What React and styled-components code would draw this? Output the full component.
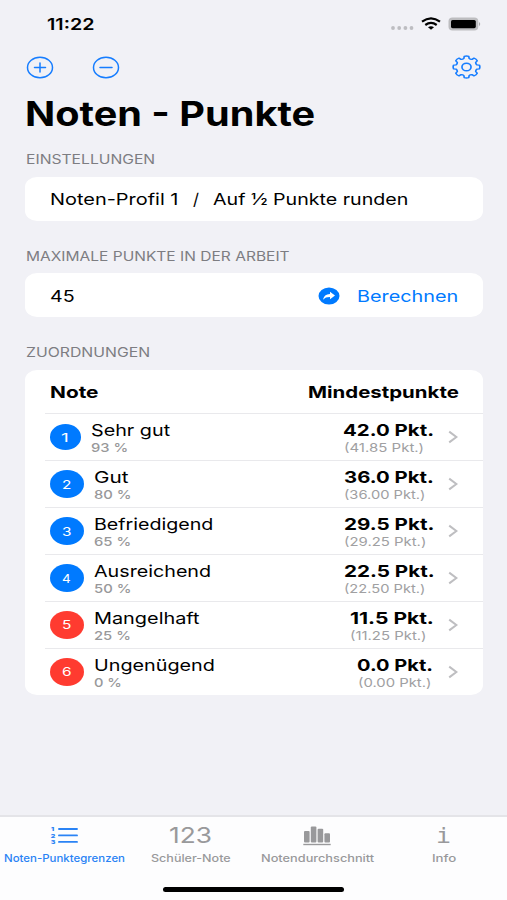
import { useLayoutEffect, useRef, useState } from 'react'
import styled, { createGlobalStyle } from 'styled-components'

const grades = [
	{ id: 1, name: 'Sehr gut', nameWidth: 79, percent: '93 %', percentWidth: 37, points: '42.0 Pkt.', pointsWidth: 90.5, exact: '(41.85 Pkt.)', exactWidth: 80 },
	{ id: 2, name: 'Gut', nameWidth: 34, percent: '80 %', percentWidth: 37, points: '36.0 Pkt.', pointsWidth: 90, exact: '(36.00 Pkt.)', exactWidth: 82 },
	{ id: 3, name: 'Befriedigend', nameWidth: 119, percent: '65 %', percentWidth: 37, points: '29.5 Pkt.', pointsWidth: 90, exact: '(29.25 Pkt.)', exactWidth: 82 },
	{ id: 4, name: 'Ausreichend', nameWidth: 117, percent: '50 %', percentWidth: 37, points: '22.5 Pkt.', pointsWidth: 90, exact: '(22.50 Pkt.)', exactWidth: 82 },
	{ id: 5, name: 'Mangelhaft', nameWidth: 106, percent: '25 %', percentWidth: 37, points: '11.5 Pkt.', pointsWidth: 84, exact: '(11.25 Pkt.)', exactWidth: 77 },
	{ id: 6, name: 'Ungenügend', nameWidth: 121, percent: '0 %', percentWidth: 28, points: '0.0 Pkt.', pointsWidth: 76.5, exact: '(0.00 Pkt.)', exactWidth: 73 },
]

// stretches its text horizontally to the given width
function Fit({ width, children }) {
	const ref = useRef(null)
	const [scale, setScale] = useState(1)
	useLayoutEffect(() => {
		setScale(width / ref.current.offsetWidth)
	}, [width])
	return (
		<FitBox $width={width}>
			<FitText ref={ref} style={{ transform: `scaleX(${scale})` }}>
				{children}
			</FitText>
		</FitBox>
	)
}

function gearPath() {
	const point = (r, deg) => {
		const a = (deg * Math.PI) / 180
		return `${(r * Math.cos(a)).toFixed(2)} ${(r * Math.sin(a)).toFixed(2)}`
	}
	let d = ''
	for (let i = 0; i < 8; i++) {
		const c = i * 45
		d += `${i ? 'L' : 'M'}${point(10.4, c - 14)} L${point(12.6, c - 10)} Q${point(13.4, c)} ${point(12.6, c + 10)} L${point(10.4, c + 14)} Q${point(9.4, c + 22.5)} ${point(10.4, c + 31)} `
	}
	return d + 'Z'
}

function GearIcon() {
	return (
		<Icon width="29" height="24" viewBox="-14 -14 28 28" preserveAspectRatio="none">
			<path d={gearPath()} strokeWidth="1.6" />
			<circle r="4.4" strokeWidth="1.6" />
		</Icon>
	)
}

function CircleIcon({ plus }) {
	return (
		<Icon width="28" height="23" viewBox="0 0 28 23">
			<ellipse cx="14" cy="11.5" rx="12.5" ry="10.3" strokeWidth="1.5" />
			<path d={plus ? 'M8.5 11.5h11M14 7v9' : 'M8 11.5h12'} strokeWidth="1.5" />
		</Icon>
	)
}

function ListIcon() {
	return (
		<TabSvg width="28" height="21" viewBox="0 0 28 21">
			<g transform="scale(1.35 1)">
				<text x="0.7" y="6.2">1</text>
				<text x="0.5" y="12.8">2</text>
				<text x="0.5" y="19.4">3</text>
			</g>
			<path d="M9 4h18M9 10.4h18M9 16.9h18" stroke="currentColor" strokeWidth="1.9" strokeLinecap="round" />
		</TabSvg>
	)
}

function ChartIcon() {
	return (
		<TabSvg width="28" height="21" viewBox="0 0 28 21">
			<rect x="1" y="6" width="5.6" height="11.6" rx="1" />
			<rect x="7.8" y="1.5" width="5.6" height="16.1" rx="1" />
			<rect x="14.6" y="3.8" width="5.6" height="13.8" rx="1" />
			<rect x="21.4" y="8.3" width="5.6" height="9.3" rx="1" />
			<rect x="0.3" y="18.8" width="27.4" height="1.4" />
		</TabSvg>
	)
}

function StatusIcons() {
	return (
		<svg width="92" height="16" viewBox="0 0 92 16">
			<g fill="#bdbdc1">
				<circle cx="4" cy="12" r="1.9" />
				<circle cx="10.2" cy="12" r="1.9" />
				<circle cx="16.4" cy="12" r="1.9" />
				<circle cx="22.5" cy="12" r="1.9" />
			</g>
			<g fill="none" stroke="#000" strokeWidth="2.2">
				<path d="M33 5.7Q42 -.9 51 5.7" />
				<path d="M36.3 9Q42 4.8 47.7 9" />
			</g>
			<path d="M39 11.3Q42 9.2 45 11.3L42 13.7Z" />
			<rect x="59.5" y="1.6" width="29.8" height="12.9" rx="4" fill="#bdbdc0" />
			<rect x="62" y="4" width="24.8" height="8.2" rx="1.6" />
			<path d="M90.2 6Q92.2 8.1 90.2 10.2Z" fill="#9c9c9f" />
		</svg>
	)
}

export default function App() {
	return (
		<Screen>
			<GlobalStyle />
			<StatusBar>
				<Fit width={48}>11:22</Fit>
				<StatusIcons />
			</StatusBar>
			<NavBar>
				<NavGroup>
					<CircleIcon plus />
					<CircleIcon />
				</NavGroup>
				<GearIcon />
			</NavBar>
			<Title>
				<Fit width={290}>Noten - Punkte</Fit>
			</Title>
			<SectionLabel $height={38} $top={2}>
				<Fit width={129}>EINSTELLUNGEN</Fit>
			</SectionLabel>
			<Card>
				<CardRow>
					<Fit width={128}>Noten-Profil 1</Fit>
					<Slash>/</Slash>
					<Fit width={195}>Auf ½ Punkte runden</Fit>
				</CardRow>
			</Card>
			<SectionLabel $height={52} $top={17}>
				<Fit width={264}>MAXIMALE PUNKTE IN DER ARBEIT</Fit>
			</SectionLabel>
			<Card>
				<CardRow $top={1}>
					<Fit width={25}>45</Fit>
					<Action>
						<svg width="22" height="18" viewBox="0 0 22 18">
							<ellipse cx="11" cy="9" rx="10.5" ry="8.6" fill="#007aff" />
							<path d="M12 4.7L17 8.5L12 12.3V10.1C8.5 10.1 7 10.8 5.2 12.8C5.6 9 8 7 12 6.9Z" fill="#fff" />
						</svg>
						<Fit width={101}>Berechnen</Fit>
					</Action>
				</CardRow>
			</Card>
			<SectionLabel $height={53} $top={17}>
				<Fit width={124}>ZUORDNUNGEN</Fit>
			</SectionLabel>
			<Card>
				<HeaderRow>
					<Fit width={48}>Note</Fit>
					<Fit width={151}>Mindestpunkte</Fit>
				</HeaderRow>
				{grades.map((g) => (
					<GradeRow key={g.id}>
						<Badge $failed={g.id > 4} $small={g.id === 1}>
							<Fit width={g.id === 1 ? 8 : 9}>{g.id}</Fit>
						</Badge>
						<Lines>
							<Name>
								<Fit width={g.nameWidth}>{g.name}</Fit>
							</Name>
							<Percent>
								<Fit width={g.percentWidth}>{g.percent}</Fit>
							</Percent>
						</Lines>
						<Points>
							<Name $bold>
								<Fit width={g.pointsWidth}>{g.points}</Fit>
							</Name>
							<Exact>
								<Fit width={g.exactWidth}>{g.exact}</Fit>
							</Exact>
						</Points>
						<Chevron width="10" height="14" viewBox="0 0 10 14">
							<path d="M1.2 1.6L8.4 7L1.2 12.4" />
						</Chevron>
					</GradeRow>
				))}
			</Card>
			<TabBar>
				<Tab $active>
					<TabIcon>
						<ListIcon />
					</TabIcon>
					<Fit width={121}>Noten-Punktegrenzen</Fit>
				</Tab>
				<Tab>
					<TabIcon>
						<Fit width={43}>123</Fit>
					</TabIcon>
					<Fit width={80}>Schüler-Note</Fit>
				</Tab>
				<Tab>
					<TabIcon>
						<ChartIcon />
					</TabIcon>
					<Fit width={113}>Notendurchschnitt</Fit>
				</Tab>
				<Tab>
					<TabIcon $mono>
						<Fit width={15}>i</Fit>
					</TabIcon>
					<Fit width={24}>Info</Fit>
				</Tab>
			</TabBar>
			<HomeArea>
				<HomeIndicator />
			</HomeArea>
		</Screen>
	)
}

const GlobalStyle = createGlobalStyle`
	* {
		box-sizing: border-box;
	}
	body {
		margin: 0;
		background: #f1f1f6;
		font-family: Inter, 'Liberation Sans', sans-serif;
	}
	svg {
		display: block;
		flex: none;
	}
`
const FitBox = styled.span`
	display: inline-flex;
	flex: none;
	width: ${(p) => p.$width}px;
`
const FitText = styled.span`
	display: inline-block;
	flex: none;
	white-space: nowrap;
	transform-origin: left center;
`
const Screen = styled.div`
	display: flex;
	flex-direction: column;
	width: 507px;
	height: 900px;
	overflow: hidden;
	background: #f1f1f6;
	color: #000;
`
const StatusBar = styled.header`
	display: flex;
	align-items: center;
	justify-content: space-between;
	height: 47px;
	padding: 0 26px 0 46.5px;
	font-size: 16px;
	font-weight: 600;
`
const NavBar = styled.nav`
	display: flex;
	align-items: center;
	justify-content: space-between;
	height: 40px;
	padding: 0 26px;
`
const NavGroup = styled.div`
	display: flex;
	gap: 38px;
`
const Icon = styled.svg`
	fill: none;
	stroke: #167dff;
	stroke-linecap: round;
	stroke-linejoin: round;
`
const Title = styled.h1`
	display: flex;
	align-items: center;
	height: 52px;
	margin: 0;
	padding: 1px 0 0 25px;
	font-size: 33.5px;
	font-weight: 700;
`
const SectionLabel = styled.h2`
	display: flex;
	align-items: center;
	height: ${(p) => p.$height}px;
	margin: 0;
	padding: ${(p) => p.$top}px 0 0 25.5px;
	font-size: 13px;
	font-weight: 400;
	color: #7d7d82;
`
const Card = styled.section`
	margin: 0 24.5px 0 25px;
	border-radius: 12px / 10px;
	background: #fff;
`
const CardRow = styled.div`
	display: flex;
	align-items: center;
	height: 44px;
	padding: ${(p) => p.$top || 0}px 24.5px 0 25px;
	font-size: 16.5px;
`
const Slash = styled.span`
	margin: 0 14.5px 0 15px;
`
const Action = styled.div`
	display: flex;
	align-items: center;
	gap: 17.5px;
	margin-left: auto;
	color: #007aff;
`
const HeaderRow = styled.div`
	display: flex;
	align-items: center;
	justify-content: space-between;
	height: 43.4px;
	padding: 1px 24px 0 25px;
	font-size: 16.5px;
	font-weight: 700;
`
const GradeRow = styled.div`
	display: flex;
	align-items: center;
	height: 46.9px;
	margin-left: 20px;
	padding: 0 24.5px 0 4.7px;
	border-top: 1px solid #e9e9ec;
`
const Badge = styled.span`
	display: flex;
	align-items: center;
	justify-content: center;
	width: ${(p) => (p.$small ? 31.5 : 34)}px;
	height: ${(p) => (p.$small ? 26 : 28)}px;
	margin-right: 10px;
	border-radius: 50%;
	background: ${(p) => (p.$failed ? '#ff3b30' : '#007aff')};
	color: #fff;
	font-size: 12px;
`
const Lines = styled.div`
	display: flex;
	flex-direction: column;
	padding-top: 4px;
`
const Points = styled(Lines)`
	margin-left: auto;
	margin-right: 14.5px;
`
const Name = styled.span`
	display: flex;
	height: 17px;
	line-height: 17px;
	font-size: 16.5px;
	font-weight: ${(p) => (p.$bold ? 700 : 400)};
`
const Percent = styled.span`
	display: flex;
	height: 17px;
	line-height: 17px;
	font-size: 12px;
	font-weight: 500;
	color: #98989a;
`
const Exact = styled(Percent)`
	padding-left: 0.5px;
	font-weight: 400;
	color: #a0a0a2;
`
const Chevron = styled.svg`
	fill: none;
	stroke: #bebec1;
	stroke-width: 2;
`
const TabBar = styled.nav`
	display: grid;
	grid-template-columns: repeat(4, 1fr);
	height: 56px;
	margin-top: auto;
	padding: 6px 0 0 1px;
	border-top: 2px solid #e4e4e8;
	background: #fdfdfe;
`
const Tab = styled.div`
	display: flex;
	flex-direction: column;
	align-items: center;
	font-size: 10.5px;
	line-height: 21px;
	font-weight: 500;
	color: ${(p) => (p.$active ? '#2a83f5' : '#99999b')};
`
const TabIcon = styled.div`
	display: flex;
	align-items: center;
	justify-content: center;
	height: 25px;
	font-family: ${(p) => (p.$mono ? "'DejaVu Sans Mono', monospace" : 'inherit')};
	font-size: ${(p) => (p.$mono ? 21.5 : 22)}px;
	font-weight: 400;
`
const TabSvg = styled.svg`
	fill: currentColor;
	text {
		font-size: 5.2px;
		font-weight: 900;
		font-family: Inter, sans-serif;
	}
`
const HomeArea = styled.footer`
	display: flex;
	justify-content: center;
	height: 29px;
	padding-top: 16px;
	background: #fdfdfe;
`
const HomeIndicator = styled.div`
	width: 181px;
	height: 5px;
	border-radius: 3px;
	background: #000;
`
